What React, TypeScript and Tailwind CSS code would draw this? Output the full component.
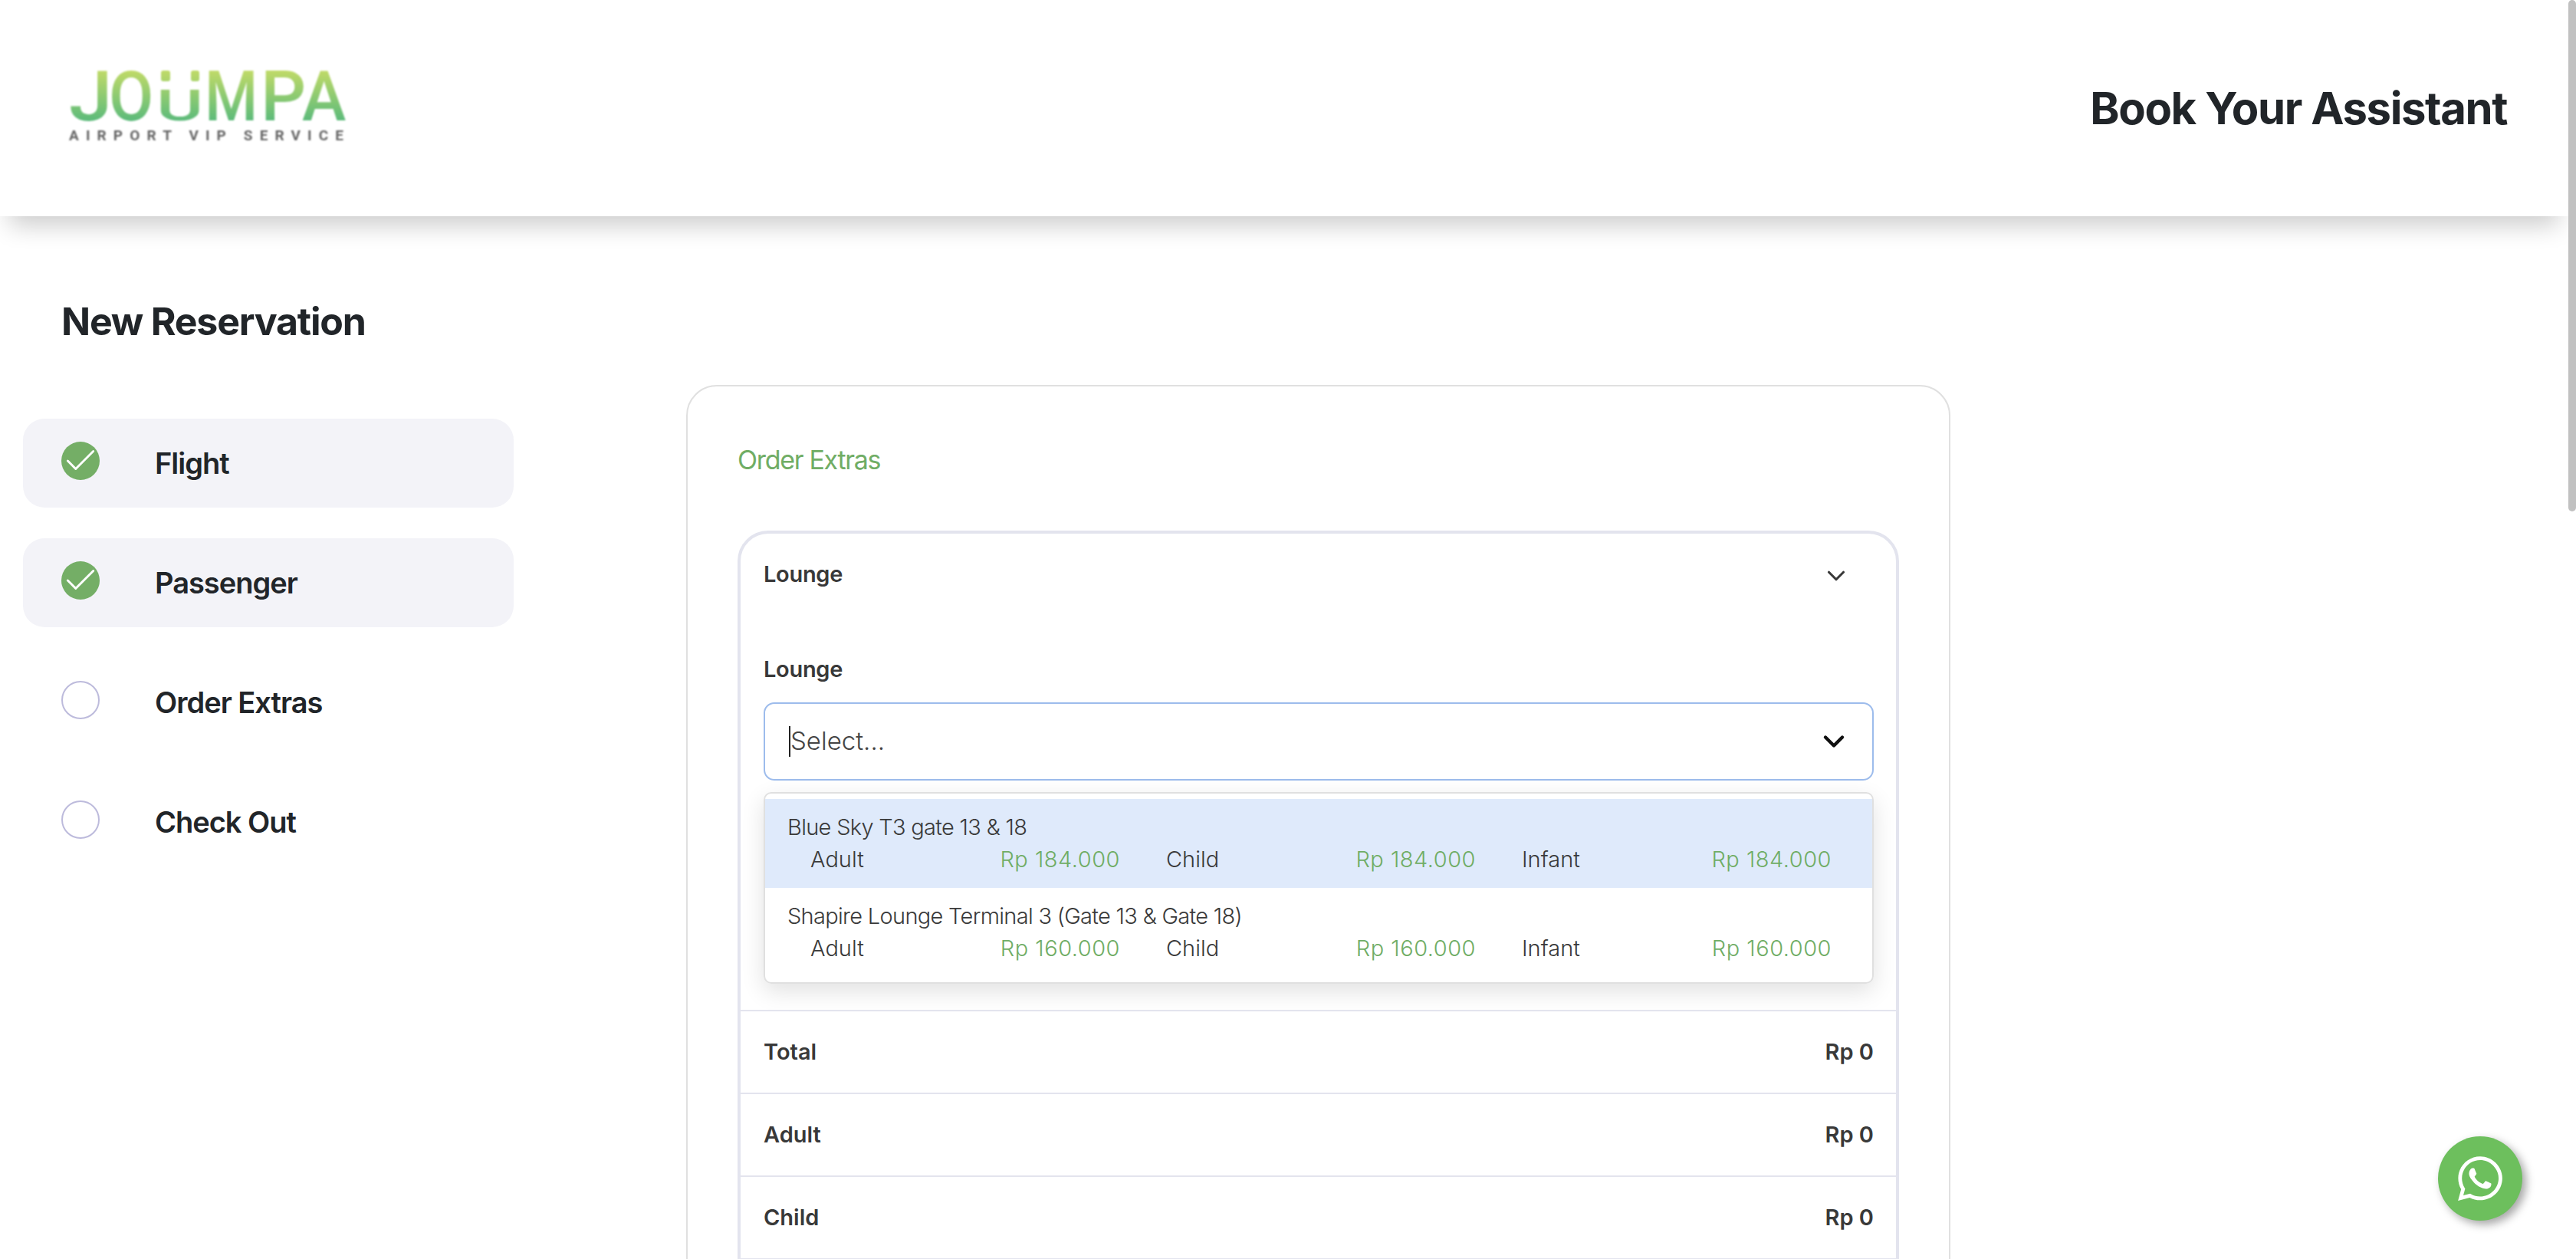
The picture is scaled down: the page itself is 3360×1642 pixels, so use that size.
import React from 'react';
import { Check, ChevronDown } from 'lucide-react';
import { FaWhatsapp } from 'react-icons/fa';

const steps = [
  { label: 'Flight', done: true },
  { label: 'Passenger', done: true },
  { label: 'Order Extras', done: false },
  { label: 'Check Out', done: false },
];

const lounges = [
  { name: 'Blue Sky T3 gate 13 & 18', price: 'Rp 184.000', active: true },
  { name: 'Shapire Lounge Terminal 3 (Gate 13 & Gate 18)', price: 'Rp 160.000', active: false },
];

// the list runs on below the fold, the page is cut off by the window
const totals = ['Total', 'Adult', 'Child', 'Infant'];

function Logo() {
  return (
    <svg width="375" height="110" viewBox="0 0 375 110" className="blur-[0.8px]">
      <defs>
        <linearGradient id="logoFill" gradientUnits="userSpaceOnUse" x1="0" y1="6" x2="0" y2="71">
          <stop offset="0" stopColor="#c0da68" />
          <stop offset="1" stopColor="#5dbb7b" />
        </linearGradient>
      </defs>
      <g fill="url(#logoFill)" fontSize="91" className="font-['Roboto',sans-serif] font-medium">
        <text transform="scale(1.12 1)" x="4.5" y="71">J</text>
        <text transform="scale(0.93 1)" x="61.3" y="71">O</text>
        <text transform="scale(1.67 1)" x="71.3" y="71" fontSize="56">U</text>
        <rect x="125" y="6" width="12" height="14" rx="3" />
        <rect x="164" y="6" width="11" height="14" rx="3" />
        <text transform="scale(0.87 1)" x="209.2" y="71">M</text>
        <text transform="scale(1.02 1)" x="250" y="71">P</text>
        <text transform="scale(0.95 1)" x="325.3" y="71">A</text>
      </g>
      <text x="5" y="97" fill="#666666" fontSize="19" textLength="358" lengthAdjust="spacing" className="font-['Roboto',sans-serif] font-bold">
        AIRPORT VIP SERVICE
      </text>
    </svg>
  );
}

function Step({ label, done }: { label: string; done: boolean }) {
  return (
    <div className={`flex h-[116px] items-center rounded-[28px] pl-[50px] ${done ? 'bg-[#f3f3f8]' : ''}`}>
      {done ? (
        <div className="mb-[6px] flex h-[50px] w-[50px] items-center justify-center rounded-full bg-[#74ae66]">
          <Check size={50} strokeWidth={1.4} className="text-white" />
        </div>
      ) : (
        <div className="mb-[6px] h-[50px] w-[50px] rounded-full border-2 border-[#bdbbdc]" />
      )}
      <span className="ml-[72px] text-[38px] leading-[48px] font-semibold tracking-[-1px] text-[#212529]">{label}</span>
    </div>
  );
}

function PriceCell({ label, price }: { label: string; price: string }) {
  return (
    <div className="flex justify-between pr-[60px]">
      <span>{label}</span>
      <span className="tracking-[0.5px] text-[#70ad65]">{price}</span>
    </div>
  );
}

export default function App() {
  return (
    <div className="flex h-[1642px] overflow-hidden bg-white font-['Inter',sans-serif]">
      <div className="flex-1">
        <header className="flex h-[282px] items-center justify-between pr-[80px] pl-[85px] shadow-[0_24px_30px_-12px_rgba(0,0,0,0.2)]">
          <Logo />
          <h1 className="text-[58px] leading-[72px] font-bold tracking-[-1.4px] text-[#212529]">Book Your Assistant</h1>
        </header>

        <div className="flex pl-[30px]">
          <aside className="w-[640px]">
            <h2 className="mt-[112px] pl-[50px] text-[50px] leading-[50px] font-bold tracking-[-1.2px] text-[#212529]">New Reservation</h2>
            <div className="mt-[102px] flex flex-col gap-[40px]">
              {steps.map((s) => (
                <Step key={s.label} label={s.label} done={s.done} />
              ))}
            </div>
          </aside>

          <main className="mt-[220px] ml-[225px] w-[1649px] rounded-[40px] border-2 border-[#e0e0e0] pt-[76px] pl-[65px]">
            <h3 className="text-[34px] leading-[40px] tracking-[-1.3px] text-[#70ad65]">Order Extras</h3>

            <section className="mt-[72px] w-[1515px] rounded-[40px] border-[4px] border-[#e3e4ee]">
              <div className="flex h-[109px] items-center justify-between pr-[59px] pb-[4px] pl-[30px] text-[#393939]">
                <span className="text-[29px] leading-[40px] font-semibold tracking-[-0.3px]">Lounge</span>
                <ChevronDown size={38} strokeWidth={2} className="mt-[4px]" />
              </div>

              <div className="pt-[48px] pr-[29px] pb-[34px] pl-[30px]">
                <label className="block text-[29px] leading-[40px] font-semibold tracking-[-0.3px] text-[#393939]">Lounge</label>
                <div className="mt-[23px] flex h-[102px] items-center justify-between rounded-[14px] border-2 border-[#9dbcec] pr-[28px] pl-[31px]">
                  <div className="flex items-center text-[33px] font-light text-[#444444]">
                    <span className="h-[40px] w-[2px] bg-[#222222]" />
                    <span>Select...</span>
                  </div>
                  <ChevronDown size={44} strokeWidth={2.4} className="text-[#111111]" />
                </div>

                <div className="mt-[15px] h-[250px] rounded-[10px] border-2 border-[#e0e0e0] pt-[7px] text-[29px] leading-[42px] font-light text-[#3a3a3a] shadow-[0_10px_30px_rgba(0,0,0,0.12)]">
                  {lounges.map((l) => (
                    <div key={l.name} className={`h-[116px] pt-[16px] pr-[30px] pl-[29px] ${l.active ? 'bg-[#dfeafb]' : ''}`}>
                      <div className="tracking-[-0.7px]">{l.name}</div>
                      <div className="grid grid-cols-[repeat(3,464px)] pl-[30px]">
                        <PriceCell label="Adult" price={l.price} />
                        <PriceCell label="Child" price={l.price} />
                        <PriceCell label="Infant" price={l.price} />
                      </div>
                    </div>
                  ))}
                </div>
              </div>

              {totals.map((t) => (
                <div key={t} className="flex h-[108px] items-center justify-between border-t-2 border-[#e3e4ee] pr-[29px] pl-[30px] text-[29px] font-semibold text-[#393939]">
                  <span>{t}</span>
                  <span>Rp 0</span>
                </div>
              ))}
            </section>
          </main>
        </div>
      </div>

      <div className="w-[10px] shrink-0">
        <div className="h-[667px] rounded-[5px] bg-[#c1c1c1]" />
      </div>

      <a className="absolute top-[1482px] left-[3180px] flex h-[110px] w-[110px] items-center justify-center rounded-full bg-[#6dbf5d] text-white shadow-[5px_5px_12px_rgba(0,0,0,0.35)]">
        <FaWhatsapp size={66} />
      </a>
    </div>
  );
}
